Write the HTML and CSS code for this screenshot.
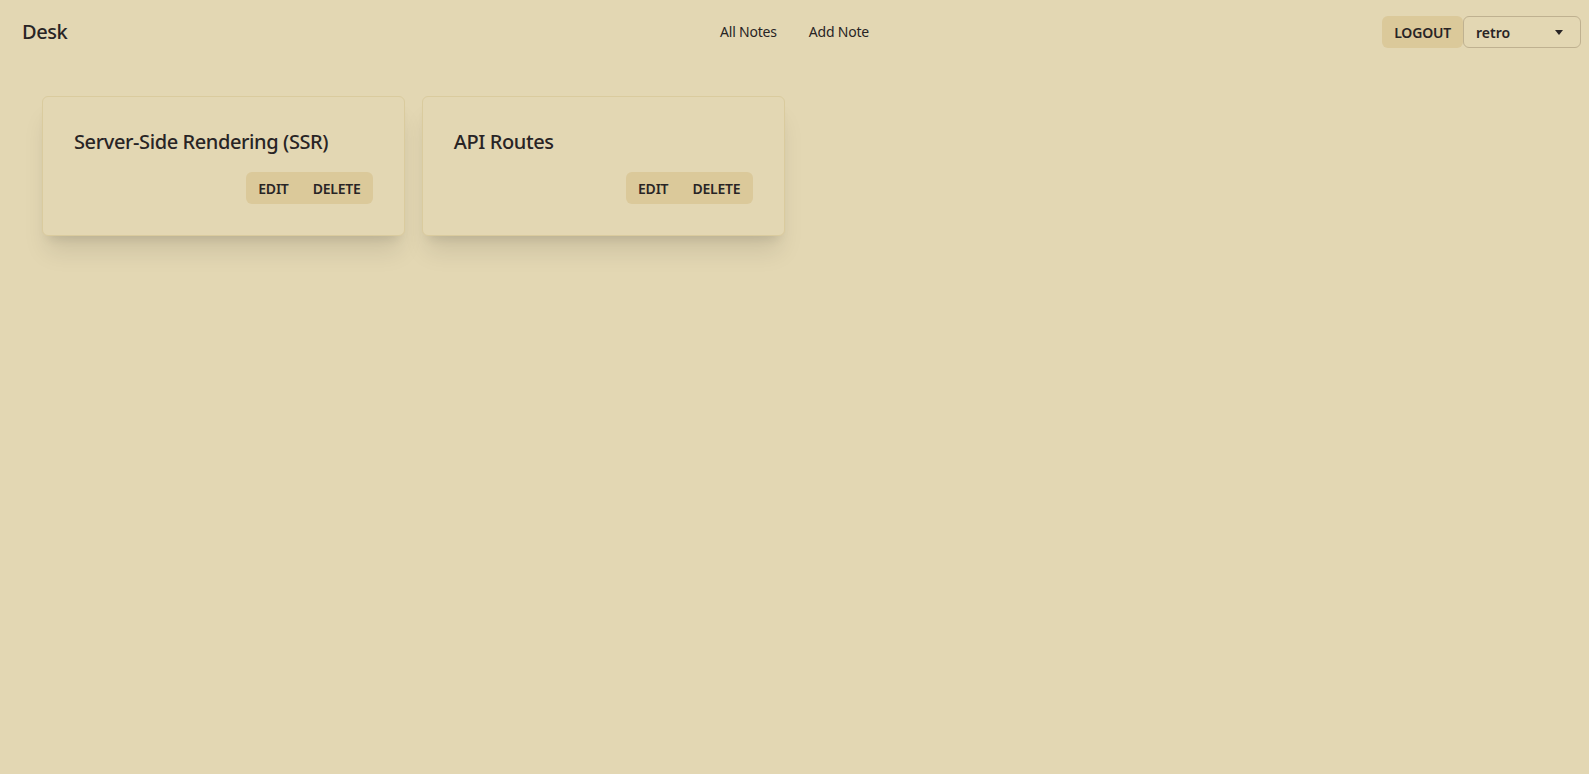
FILE: index.html
```html
<!DOCTYPE html>
<html lang="en">
<head>
<meta charset="utf-8">
<title>Desk</title>
<link rel="stylesheet" href="styles.css">
</head>
<body>
<header class="navbar">
  <div class="navbar-start">
    <a class="brand" href="#">Desk</a>
  </div>
  <nav class="navbar-center">
    <a class="nav-link" href="#">All Notes</a>
    <a class="nav-link" href="#">Add Note</a>
  </nav>
  <div class="navbar-end">
    <button class="btn btn-logout">LOGOUT</button>
    <div class="theme-select">
      <span class="theme-value">retro</span>
      <svg class="caret" width="8" height="5" viewBox="0 0 8 5"><path d="M0 0H8L4 5Z" fill="#282425"/></svg>
    </div>
  </div>
</header>
<main class="notes">
  <article class="card">
    <h2 class="card-title">Server-Side Rendering (SSR)</h2>
    <div class="card-actions">
      <div class="btn-group">
        <button class="btn btn-sm">EDIT</button>
        <button class="btn btn-sm">DELETE</button>
      </div>
    </div>
  </article>
  <article class="card">
    <h2 class="card-title">API Routes</h2>
    <div class="card-actions">
      <div class="btn-group">
        <button class="btn btn-sm">EDIT</button>
        <button class="btn btn-sm">DELETE</button>
      </div>
    </div>
  </article>
</main>
</body>
</html>
```
FILE: styles.css
```css
* { box-sizing: border-box; }
html, body { height: 100%; }
body {
  margin: 0;
  background: #e3d7b3;
  color: #282425;
  font-family: "Noto Sans", "Open Sans", sans-serif;
}
.navbar {
  display: flex;
  align-items: center;
  height: 64px;
  padding: 8px;
}
.navbar-start, .navbar-end {
  flex: 1;
  display: flex;
  align-items: center;
}
.navbar-end { justify-content: flex-end; }
.navbar-center { display: flex; align-items: center; }
.brand {
  color: #282425;
  text-decoration: none;
  font-size: 20px;
  font-weight: 500;
  letter-spacing: -0.4px;
  padding: 0 14px;
  line-height: 48px;
}
.nav-link {
  color: #282425;
  text-decoration: none;
  font-size: 14px;
  letter-spacing: -0.2px;
  padding: 8px 16px;
  line-height: 20px;
}
.btn {
  border: none;
  font-family: inherit;
  font-weight: 600;
  font-size: 14px;
  letter-spacing: -0.2px;
  color: #282425;
  background: #dbc99a;
  cursor: pointer;
}
.btn-logout {
  height: 32px;
  padding: 0 12px;
  border-radius: 6px;
}
.theme-select {
  width: 118px;
  height: 32px;
  border: 1px solid #bfb190;
  border-radius: 6px;
  display: flex;
  align-items: center;
  justify-content: space-between;
  padding: 0 17px 0 12px;
  font-size: 14px;
  font-weight: 600;
}
.caret { display: block; }
.notes {
  display: grid;
  grid-template-columns: repeat(4, 1fr);
  gap: 17px;
  padding: 32px 45px 32px 42px;
  align-items: start;
}
.card {
  background: #e3d7b3;
  border: 1px solid #dacb9e;
  border-radius: 6px;
  padding: 31px;
  display: flex;
  flex-direction: column;
  gap: 16px;
  box-shadow: 0 20px 25px -5px rgba(0,0,0,0.1), 0 8px 10px -6px rgba(0,0,0,0.1);
}
.card-title {
  margin: 0;
  font-size: 20px;
  line-height: 28px;
  font-weight: 500;
  letter-spacing: -0.4px;
}
.card-actions {
  display: flex;
  justify-content: flex-end;
}
.btn-group {
  display: flex;
  background: #dbc99a;
  border-radius: 6px;
}
.btn-sm {
  height: 32px;
  padding: 0 12px;
  background: transparent;
}
```
